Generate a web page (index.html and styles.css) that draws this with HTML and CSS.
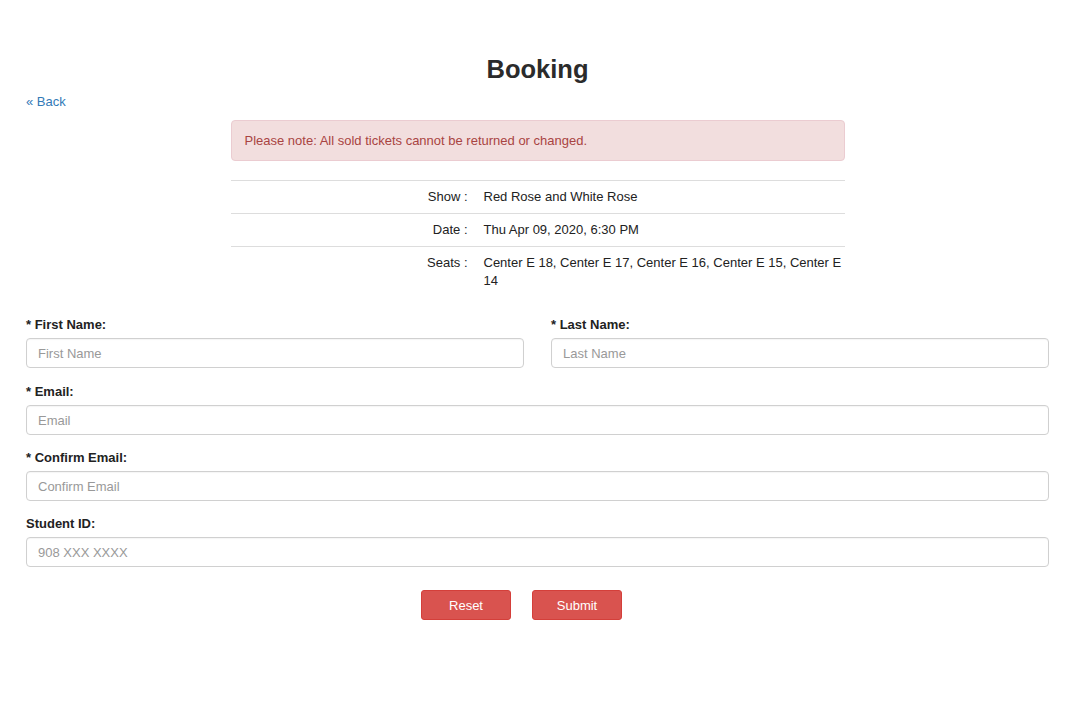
FILE: index.html
```html
<!DOCTYPE html>
<html lang="en">
<head>
<meta charset="utf-8">
<title>Booking</title>
<link rel="stylesheet" href="styles.css">
</head>
<body>
<div class="container">
  <h1 class="title">Booking</h1>
  <a class="back" href="#">« Back</a>
  <div class="summary">
    <div class="alert">Please note: All sold tickets cannot be returned or changed.</div>
    <table class="details">
      <tr><th>Show :</th><td>Red Rose and White Rose</td></tr>
      <tr><th>Date :</th><td>Thu Apr 09, 2020, 6:30 PM</td></tr>
      <tr><th>Seats :</th><td>Center E 18, Center E 17, Center E 16, Center E 15, Center E 14</td></tr>
    </table>
  </div>
  <form class="form">
    <div class="row-2">
      <div class="group">
        <label>* First Name:</label>
        <input type="text" placeholder="First Name">
      </div>
      <div class="group">
        <label>* Last Name:</label>
        <input type="text" placeholder="Last Name">
      </div>
    </div>
    <div class="group">
      <label>* Email:</label>
      <input type="text" placeholder="Email">
    </div>
    <div class="group">
      <label>* Confirm Email:</label>
      <input type="text" placeholder="Confirm Email">
    </div>
    <div class="group">
      <label>Student ID:</label>
      <input type="text" placeholder="908 XXX XXXX">
    </div>
    <div class="actions">
      <button type="reset" class="btn">Reset</button>
      <button type="submit" class="btn">Submit</button>
    </div>
  </form>
</div>
</body>
</html>
```

FILE: styles.css
```css
* { box-sizing: border-box; }
html, body { margin: 0; padding: 0; background: #fff; }
body {
  font-family: "Liberation Sans", Arial, Helvetica, sans-serif;
  font-size: 13px;
  line-height: 18px;
  color: #333;
}
.container {
  padding: 0 31px 0 26px;
}
.title {
  margin: 54px 0 0;
  font-size: 25.5px;
  line-height: 30px;
  font-weight: bold;
  text-align: center;
  color: #2b2b2b;
}
.back {
  display: inline-block;
  margin-top: 9px;
  color: #337ab7;
  text-decoration: none;
  line-height: 18px;
}
.summary {
  width: 614px;
  margin: 9px auto 0;
}
.alert {
  background: #f2dede;
  border: 1px solid #ebccd1;
  border-radius: 4px;
  color: #a94442;
  padding: 11px 13px;
  line-height: 17px;
}
.details {
  width: 100%;
  margin-top: 19px;
  border-collapse: collapse;
}
.details th, .details td {
  border-top: 1px solid #ddd;
  padding: 7px 8px;
  vertical-align: top;
  line-height: 18px;
  font-size: 13px;
  color: #222;
}
.details td { padding-right: 0; }
.details th {
  width: 245px;
  text-align: right;
  font-weight: normal;
}
.form {
  margin-top: 18px;
}
.row-2 {
  display: grid;
  grid-template-columns: 1fr 1fr;
  column-gap: 27px;
  margin-bottom: 14px;
}
.row-2 .group { margin-bottom: 0; }
.group {
  display: flex;
  flex-direction: column;
  margin-bottom: 13px;
}
.group label {
  font-weight: bold;
  color: #222;
  line-height: 18px;
  padding-top: 1px;
  margin-bottom: 4px;
}
.group input {
  height: 30px;
  width: 100%;
  border: 1px solid #d0d0d0;
  border-radius: 4px;
  padding: 0 11px;
  font-family: "Liberation Sans", Arial, Helvetica, sans-serif;
  font-size: 13px;
  color: #555;
  box-shadow: inset 0 1px 1px rgba(0,0,0,0.04);
}
.group input::placeholder { color: #999; }
.actions {
  display: flex;
  justify-content: center;
  gap: 21px;
  padding-right: 32px;
  margin-top: 23px;
}
.btn {
  width: 90px;
  height: 30px;
  background: #d9534f;
  border: 1px solid #d43f3a;
  border-radius: 3px;
  color: #fff;
  font-family: "Liberation Sans", Arial, Helvetica, sans-serif;
  font-size: 13px;
  cursor: pointer;
}
```
